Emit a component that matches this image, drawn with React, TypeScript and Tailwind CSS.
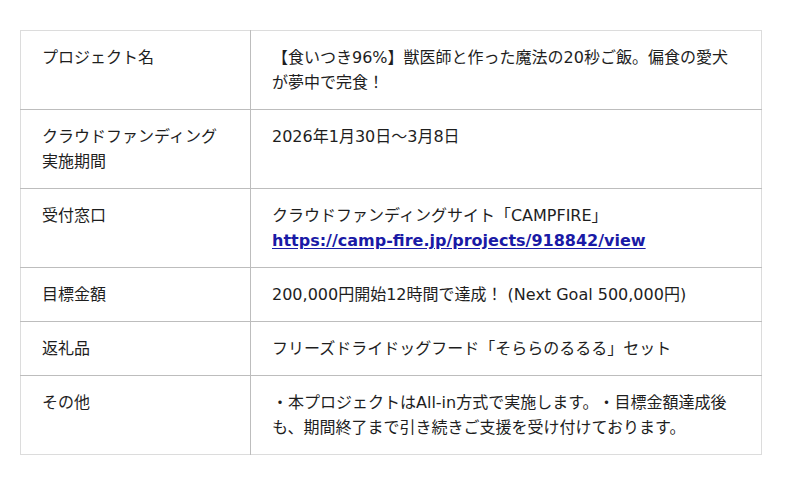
import React from "react";

type Row = {
  label: React.ReactNode;
  value: React.ReactNode;
};

const rows: Row[] = [
  {
    label: "プロジェクト名",
    value: "【食いつき96%】獣医師と作った魔法の20秒ご飯。偏食の愛犬が夢中で完食！",
  },
  {
    label: (
      <>
        クラウドファンディング
        <br />
        実施期間
      </>
    ),
    value: "2026年1月30日〜3月8日",
  },
  {
    label: "受付窓口",
    value: (
      <>
        クラウドファンディングサイト「CAMPFIRE」
        <br />
        <a
          href="#"
          className="font-bold text-[#1a1aa6] underline underline-offset-2"
        >
          https://camp-fire.jp/projects/918842/view
        </a>
      </>
    ),
  },
  {
    label: "目標金額",
    value: "200,000円開始12時間で達成！ (Next Goal 500,000円)",
  },
  {
    label: "返礼品",
    value: "フリーズドライドッグフード「そららのるるる」セット",
  },
  {
    label: "その他",
    value:
      "・本プロジェクトはAll-in方式で実施します。・目標金額達成後も、期間終了まで引き続きご支援を受け付けております。",
  },
];

export default function App() {
  return (
    <div className="min-h-[485px] w-[800px] bg-white px-5 pt-[30px] font-['DejaVu_Sans','Noto_Sans_CJK_JP',sans-serif] text-[16px] leading-[25px] text-[#1e1e1e] [text-spacing-trim:space-all]">
      <table className="w-[742px] table-fixed border-collapse border border-[#dcdcdc]">
        <colgroup>
          <col className="w-[230px]" />
          <col />
        </colgroup>
        <tbody>
          {rows.map((row, i) => (
            <tr key={i} className="border-t border-[#bdbdbd] first:border-t-0">
              <td className="border-r border-[#bdbdbd] px-[21px] py-[14px] align-top">
                {row.label}
              </td>
              <td className="px-[21px] py-[14px] align-top">{row.value}</td>
            </tr>
          ))}
        </tbody>
      </table>
    </div>
  );
}
